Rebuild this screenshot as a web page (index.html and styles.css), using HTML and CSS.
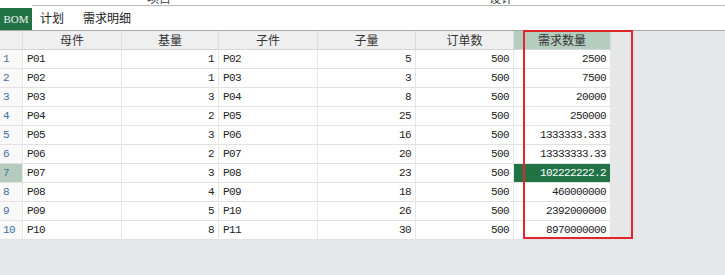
FILE: index.html
```html
<!DOCTYPE html>
<html lang="zh-CN">
<head>
    <meta charset="UTF-8">
    <title>需求明细</title>
    <link rel="stylesheet" href="styles.css">
</head>
<body>
    <div class="topstrip">
        <span class="ghost g1">项目</span>
        <span class="ghost g2">设计</span>
    </div>
    <div class="tabbar">
        <div class="tab active">BOM</div>
        <div class="tabs-rest">
            <div class="tab">计划</div>
            <div class="tab">需求明细</div>
        </div>
    </div>

    <div class="grid">
        <div class="hd rn"></div>
        <div class="hd">母件</div>
        <div class="hd">基量</div>
        <div class="hd">子件</div>
        <div class="hd">子量</div>
        <div class="hd">订单数</div>
        <div class="hd sel">需求数量</div>

        <div class="rn">1</div><div class="c">P01</div><div class="c num">1</div><div class="c">P02</div><div class="c num">5</div><div class="c num">500</div><div class="c num">2500</div>
        <div class="rn">2</div><div class="c">P02</div><div class="c num">1</div><div class="c">P03</div><div class="c num">3</div><div class="c num">500</div><div class="c num">7500</div>
        <div class="rn">3</div><div class="c">P03</div><div class="c num">3</div><div class="c">P04</div><div class="c num">8</div><div class="c num">500</div><div class="c num">20000</div>
        <div class="rn">4</div><div class="c">P04</div><div class="c num">2</div><div class="c">P05</div><div class="c num">25</div><div class="c num">500</div><div class="c num">250000</div>
        <div class="rn">5</div><div class="c">P05</div><div class="c num">3</div><div class="c">P06</div><div class="c num">16</div><div class="c num">500</div><div class="c num">1333333.333</div>
        <div class="rn">6</div><div class="c">P06</div><div class="c num">2</div><div class="c">P07</div><div class="c num">20</div><div class="c num">500</div><div class="c num">13333333.33</div>
        <div class="rn sel">7</div><div class="c">P07</div><div class="c num">3</div><div class="c">P08</div><div class="c num">23</div><div class="c num">500</div><div class="c num active">102222222.2</div>
        <div class="rn">8</div><div class="c">P08</div><div class="c num">4</div><div class="c">P09</div><div class="c num">18</div><div class="c num">500</div><div class="c num">460000000</div>
        <div class="rn">9</div><div class="c">P09</div><div class="c num">5</div><div class="c">P10</div><div class="c num">26</div><div class="c num">500</div><div class="c num">2392000000</div>
        <div class="rn">10</div><div class="c">P10</div><div class="c num">8</div><div class="c">P11</div><div class="c num">30</div><div class="c num">500</div><div class="c num">8970000000</div>
    </div>

    <div class="mark"></div>
</body>
</html>
```

FILE: styles.css
```css
body {
    margin: 0;
    position: relative;
    background-color: #e6e7e9;
    font-family: "Noto Sans CJK SC", sans-serif;
    color: #222;
}
.topstrip {
    height: 5px;
    overflow: hidden;
    background: white;
    display: flex;
}
.ghost {
    display: inline-block;
    font-size: 12px;
    line-height: 12px;
    margin-top: -8px;
    color: #444;
}
.g1 {
    margin-left: 147px;
}
.g2 {
    margin-left: 318px;
}
.tabbar {
    display: flex;
    height: 25px;
    background: white;
    border-bottom: 1px solid #a9a9a9;
}
.tabs-rest {
    flex: 1;
    display: flex;
    gap: 19px;
    padding-left: 8px;
    border-top: 1px solid #b8b8b8;
}
.tab {
    font-size: 12px;
    line-height: 24px;
    color: #222;
}
.tab.active {
    width: 32px;
    height: 22px;
    margin-top: 3px;
    background-color: #217346;
    color: #f2f2f2;
    font-family: "Liberation Serif", serif;
    font-size: 11px;
    line-height: 22px;
    text-align: center;
}
.grid {
    display: grid;
    grid-template-columns: 23px 99px 97px 99px 98px 98px 97px;
    width: 611px;
}
.grid > div {
    box-sizing: border-box;
    height: 19px;
    border-right: 1px solid #e6e6e6;
    border-bottom: 1px solid #e2e2e2;
    white-space: nowrap;
    overflow: hidden;
}
.hd {
    background-color: #efefef;
    text-align: center;
    font-size: 12px;
    line-height: 18px;
    color: #333;
}
.grid > .hd {
    border-right-color: #dcdcdc;
    border-bottom-color: #d4d4d4;
}
.hd.sel {
    background-color: #b5cdbf;
}
.rn {
    background-color: #f9f9f9;
    color: #3e6ea6;
    font-family: "Liberation Mono", monospace;
    font-size: 11px;
    letter-spacing: -0.6px;
    line-height: 18px;
    padding-left: 3px;
}
.hd.rn {
    background-color: #efefef;
}
.rn.sel {
    background-color: #b5cbbd;
}
.c {
    background: white;
    font-family: "Liberation Mono", monospace;
    font-size: 11px;
    letter-spacing: -0.6px;
    line-height: 18px;
    padding: 0 4px;
}
.num {
    text-align: right;
}
.c.active {
    background-color: #217346;
    color: white;
}
.mark {
    position: absolute;
    left: 523px;
    top: 30px;
    width: 110px;
    height: 209px;
    box-sizing: border-box;
    border: 2px solid #e3262b;
}
```
